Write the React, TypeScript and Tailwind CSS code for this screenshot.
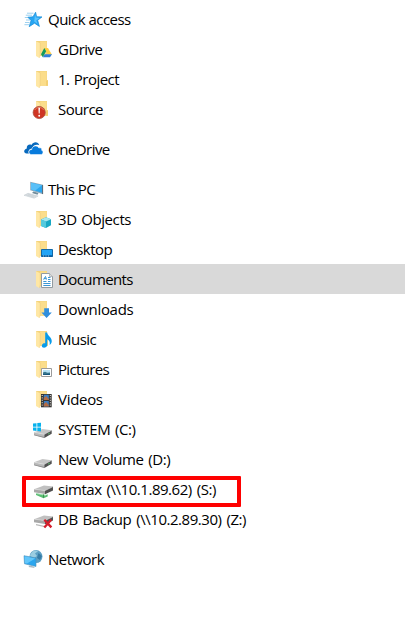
import React from "react";

type IconProps = { children?: React.ReactNode };

function Icon({ children }: IconProps) {
  return (
    <svg className="h-[30px] w-[26px] shrink-0" viewBox="0 0 26 30" fill="none">
      {children}
    </svg>
  );
}

function Folder({ children }: IconProps) {
  return (
    <Icon>
      <path d="M4 7H15V16H16V21.7H4Z" fill="#f3d27b" />
      <path d="M8.2 7.5H14.8V16H16V21.7H8Z" fill="#fbdd8b" />
      <path d="M14 16.5H16V21.7H14Z" fill="#f3cf74" />
      <path d="M4 7.2L8.2 9.2V21L7.2 24L4 22Z" fill="#ffe7a4" />
      <path d="M7.4 23.8L8.2 21V9.2" stroke="#ecca75" strokeWidth=".5" />
      {children}
    </Icon>
  );
}

function Drive() {
  return (
    <>
      <path d="M2 18.2L10.5 15L19.7 16.2L12.3 20.3Z" fill="#c6c6c6" />
      <path d="M2 18.2L12.3 20.3V23.8L2 21Z" fill="#b9b9b9" />
      <path d="M2 20.4L12.3 23V24L2 21.2Z" fill="#8c8c8c" />
      <path d="M12.3 20.3L19.7 16.2V19.8L12.3 23.9Z" fill="#505050" />
      <path d="M2.5 18.3L12.3 20.3L19.4 16.5" stroke="#e6e6e6" strokeWidth=".5" />
      <path d="M16.2 20L17.6 19.2" stroke="#55d36a" strokeWidth="1" />
    </>
  );
}

function NetDrive() {
  return (
    <>
      <path d="M2 15.2L12 11.5L21 12.6L13 16.6Z" fill="#c0c0c0" />
      <path d="M2 15.2L13 16.6V20L2 18.2Z" fill="#a8a8a8" />
      <path d="M13 16.6L21 12.6V16.4L13 20.2Z" fill="#505050" />
      <path d="M2.5 15.2L13 16.6L20.7 12.9" stroke="#e2e2e2" strokeWidth=".5" />
    </>
  );
}

const icons: Record<string, React.ReactNode> = {
  star: (
    <Icon>
      <path d="M13.6 8.2L14.6 12.7L20 12.9L15.7 16.3L17.4 22.4L12.5 19.2L7.2 22.7L9 16.5L5.8 13.2L11 12.8Z" fill="#27a5f2" stroke="#168bd7" strokeWidth=".7" />
      <path d="M13.1 10L13.8 13.6L17.7 14L14.2 16.2L15.5 19.7L12.2 17.5Z" fill="#5bc3fc" />
      <path d="M5 9.2H11.5M3.8 11.2H10M2.8 13.5H6M4 16H8M3 18.5H7.5M2.4 20.7H7" stroke="#74bde9" strokeWidth=".7" />
    </Icon>
  ),
  gdrive: (
    <Folder>
      <path d="M12.3 14H16L20 20.7H16.2Z" fill="#ffcf42" />
      <path d="M12.3 14L14.2 17.3L10.8 23.3L9 20.2Z" fill="#149b5c" />
      <path d="M12.7 20.2H20L18 23.3H10.8Z" fill="#337fd8" />
    </Folder>
  ),
  folder: <Folder />,
  source: (
    <Folder>
      <circle cx="7.2" cy="18.5" r="6.1" fill="#cf3523" stroke="#a94f3f" strokeWidth=".8" />
      <path d="M2.8 16A5 5 0 0 1 11.6 16" stroke="#e77a58" strokeWidth="1" />
      <path d="M6.4 13.8H8L7.7 19.6H6.7Z" fill="white" />
      <circle cx="7.2" cy="21.8" r=".95" fill="white" />
    </Folder>
  ),
  cloud: (
    <Icon>
      <path d="M4.5 19.5C1.5 19 1.3 15.5 4.8 14.5C4.3 11.3 7.4 9.6 9.4 10.9C11.5 7 16.5 7.5 17.3 11.3C13.5 9.8 10.8 12 10.3 14.4C7 14.5 5.8 17 7 19.5Z" fill="#0869bd" />
      <path d="M9.3 20.5C6 20.2 6.2 15.6 9.8 15.5C10 11.5 15.4 10.6 16.9 14C19 13.3 20.2 14.8 19.6 16.2C22 17 21 20.5 19 20.5Z" fill="#087bdc" stroke="white" strokeWidth=".5" />
    </Icon>
  ),
  pc: (
    <Icon>
      <path d="M8.2 7.7L21 10.7V20.3L8.2 16.3Z" fill="#8eabbd" />
      <path d="M9 8.8L20 11.3V18.8L9 15.5Z" fill="#2ba6ee" />
      <path d="M9 8.8L20 11.3L13 16.7L9 15.5Z" fill="#59c0f8" />
      <path d="M20.6 11V20" stroke="#56697a" />
      <path d="M11.5 17.4L16.5 19L15.5 20.7L10 19Z" fill="#738d9c" />
      <path d="M2 21.3L6 19.3L16.2 22L12.2 24.2Z" fill="#dce1e4" stroke="#bdc7cc" strokeWidth=".5" />
      <path d="M4.5 20.9L12 23M6 20.2L14 22.4" stroke="#c0c9ce" strokeWidth=".5" />
    </Icon>
  ),
  objects: (
    <Folder>
      <path d="M9 15.5L14 13.3L19 15.2V21.3L14 24L9 22Z" fill="#19a8c4" />
      <path d="M9 15.5L14 13.3L19 15.2L14 17.6Z" fill="#a5e6ef" />
      <path d="M9 15.5L14 17.6V24L9 22Z" fill="#55cadd" />
    </Folder>
  ),
  desktop: (
    <Folder>
      <path d="M9.5 15.5H20.5V22.5H9.5Z" fill="#22a4f6" stroke="#1269a8" />
      <path d="M9.5 22H20.5" stroke="#075b9e" strokeWidth="1.5" />
      <path d="M11 22H12M13.5 22H14.5M16 22H17" stroke="white" strokeWidth=".6" />
    </Folder>
  ),
  documents: (
    <Folder>
      <path d="M9.5 9.5H17.5L20.5 12.5V23.5H9.5Z" fill="white" stroke="#929ba1" />
      <path d="M17.5 9.5V12.5H20.5" fill="#ddd" stroke="#929ba1" strokeWidth=".6" />
      <path d="M11.5 15.5L13.5 12.5L14.5 15.5M12 14.7H14.3M16 13.5H18.5M16 15.5H18.5M11.3 17.5H14.5M16 17.5H18.5M11.3 19.5H18.5M11.3 21.5H18.5" stroke="#258bcf" strokeWidth=".9" />
    </Folder>
  ),
  downloads: (
    <Folder>
      <path d="M12.2 14.3H17V18.5H19.8L14.6 24L9.4 18.5H12.2Z" fill="#308edd" />
    </Folder>
  ),
  music: (
    <Folder>
      <path d="M13.2 8.5H15.2C15.3 12 20.4 13.2 19.7 18C19.3 19.5 18.3 20.5 17.6 21C18.3 17.5 17 16.2 15.2 15.5V21C15 24.2 9.5 24.7 9.8 21.5C10.2 19.3 12 19 13.2 19.2Z" fill="#079bea" />
    </Folder>
  ),
  pictures: (
    <Folder>
      <path d="M9.5 14.5H19.5V22.5H9.5Z" fill="white" stroke="#9b9b9b" />
      <path d="M11 16H18V21H11Z" fill="#b6e2f6" />
      <path d="M11 18.6L13 17.8L15.5 18.8L18 18.5V21H11Z" fill="#38768e" />
      <path d="M11 20.2L18 19.8V21H11Z" fill="#17577c" />
    </Folder>
  ),
  videos: (
    <Folder>
      <path d="M9 10H19.7V23.3H9Z" fill="#363432" />
      <path d="M11.8 10.8H16.8V16H11.8ZM11.8 17H16.8V22.5H11.8Z" fill="#387dc4" />
      <path d="M11.8 14L14 12L16.8 15V16H11.8ZM11.8 20L14 18L16.8 21V22.5H11.8Z" fill="#b36c45" />
      <path d="M10.2 11V22.5M18.3 11V22.5" stroke="#eee" strokeWidth="1" strokeDasharray="1 1.4" />
    </Folder>
  ),
  system: (
    <Icon>
      <Drive />
      <path d="M1 9.6L4.5 9.2V12.7H1ZM5.3 9.1L9 8.7V12.7H5.3ZM1 13.5H4.5V17L1 16.6ZM5.3 13.5H9V17.5L5.3 17.1Z" fill="#08b2ed" />
    </Icon>
  ),
  drive: <Icon><Drive /></Icon>,
  network_drive: (
    <Icon>
      <NetDrive />
      <path d="M4 19.3L9 20.3L14 21L15.7 20.2V22.4L11.5 24.2L4 21Z" fill="#59bd72" />
      <path d="M4 19.4L14 21.5" stroke="#b1dfbd" strokeWidth=".8" />
      <path d="M11.5 20.5V23.8" stroke="#3c934f" strokeWidth="1" />
    </Icon>
  ),
  disconnected: (
    <Icon>
      <NetDrive />
      <path d="M4 20L13 22V23.3L4 21.2Z" fill="#b8b8b8" />
      <path d="M12.3 15.7L19.4 23.4M19.2 15.7L12.3 23.4" stroke="#d41d2b" strokeWidth="2.3" />
    </Icon>
  ),
  network: (
    <Icon>
      <circle cx="14" cy="12.6" r="6.5" fill="#5da0c4" />
      <path d="M8.5 10Q12 5 16 7.3L13 9.5L15 12L12 14L8 12Z" fill="#9bcde1" />
      <path d="M16.5 9L20 12L18 16L15 14Z" fill="#377ba5" />
      <path d="M2 11.7L14 14V22.5L2.5 19.8Z" fill="#2ba6ee" stroke="#4f91b8" strokeWidth=".6" />
      <path d="M2.5 12.3L13.2 14.5L5 19.5L3 19.2Z" fill="#62c6fa" />
      <path d="M7.5 21.5L11.7 22.4L12.7 24L6.5 23Z" fill="#a8bac4" />
    </Icon>
  ),
};

type Item = { icon: string; label: string; spacing: string; selected?: boolean; marked?: boolean };

const tight = "tracking-[-0.53px]";
const wide = "tracking-[-0.46px] [word-spacing:1.5px]";

const groups: { root: Item; items: Item[] }[] = [
  {
    root: { icon: "star", label: "Quick access", spacing: tight },
    items: [
      { icon: "gdrive", label: "GDrive", spacing: tight },
      { icon: "folder", label: "1. Project", spacing: "tracking-[-0.53px] [word-spacing:1px]" },
      { icon: "source", label: "Source", spacing: tight },
    ],
  },
  { root: { icon: "cloud", label: "OneDrive", spacing: tight }, items: [] },
  {
    root: { icon: "pc", label: "This PC", spacing: tight },
    items: [
      { icon: "objects", label: "3D Objects", spacing: "tracking-[-0.4px] [word-spacing:1px]" },
      { icon: "desktop", label: "Desktop", spacing: tight },
      { icon: "documents", label: "Documents", spacing: "tracking-[-0.6px]", selected: true },
      { icon: "downloads", label: "Downloads", spacing: "tracking-[-0.32px]" },
      { icon: "music", label: "Music", spacing: tight },
      { icon: "pictures", label: "Pictures", spacing: "tracking-[-0.65px]" },
      { icon: "videos", label: "Videos", spacing: "tracking-[-0.3px]" },
      { icon: "system", label: "SYSTEM (C:)", spacing: wide },
      { icon: "drive", label: "New Volume (D:)", spacing: wide },
      { icon: "network_drive", label: "simtax (\\\\10.1.89.62) (S:)", spacing: wide, marked: true },
      { icon: "disconnected", label: "DB Backup (\\\\10.2.89.30) (Z:)", spacing: wide },
    ],
  },
  { root: { icon: "network", label: "Network", spacing: tight }, items: [] },
];

function Row({ item, child = false }: { item: Item; child?: boolean }) {
  return (
    <div className={`relative flex h-[30px] items-start ${child ? "pl-8" : "pl-[22px]"} ${item.selected ? "bg-[#d9d9d9]" : ""}`}>
      {icons[item.icon]}
      <span className={`whitespace-pre leading-[30px] ${item.spacing}`}>{item.label}</span>
      {item.marked && <div className="absolute top-[2px] left-[22px] h-[31px] w-[219px] rounded-[1px] border-4 border-[#fe0000]" />}
    </div>
  );
}

export default function App() {
  return (
    <nav className="flex h-[623px] w-[405px] flex-col gap-2.5 overflow-hidden bg-white pt-1 font-['Open_Sans','Noto_Sans',sans-serif] text-[15px] text-black">
      {groups.map((group) => (
        <div key={group.root.label}>
          <Row item={group.root} />
          {group.items.map((item) => <Row key={item.label} item={item} child />)}
        </div>
      ))}
    </nav>
  );
}
